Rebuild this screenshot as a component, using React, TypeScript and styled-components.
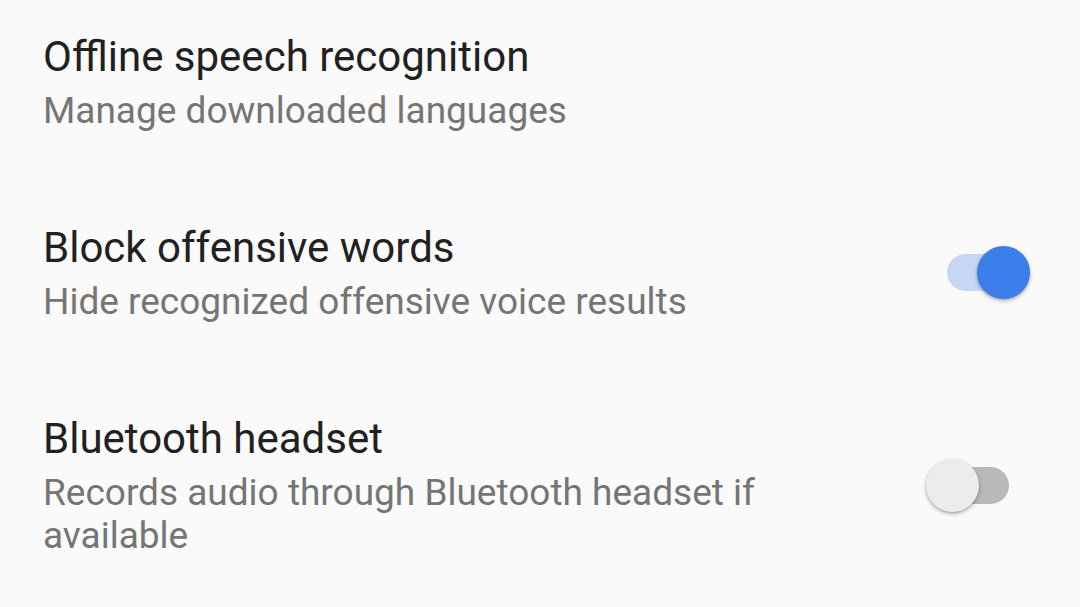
import styled, { createGlobalStyle } from "styled-components"

const GlobalStyle = createGlobalStyle`
  html, body {
    margin: 0;
    padding: 0;
    background: #fafafa;
  }
  body {
    font-family: Roboto, "Noto Sans", sans-serif;
  }
`

interface Setting {
  title: string
  summary: string
  toggle?: boolean
}

const settings: Setting[] = [
  { title: "Offline speech recognition", summary: "Manage downloaded languages" },
  {
    title: "Block offensive words",
    summary: "Hide recognized offensive voice results",
    toggle: true,
  },
  {
    title: "Bluetooth headset",
    summary: "Records audio through Bluetooth headset if available",
    toggle: false,
  },
]

interface SwitchProps {
  $on: boolean
}

export default function App() {
  return (
    <>
      <GlobalStyle />
      <Screen>
        {settings.map((s) => (
          <Row key={s.title}>
            <Texts>
              <Title>{s.title}</Title>
              <Summary>{s.summary}</Summary>
            </Texts>
            {s.toggle !== undefined && (
              <Switch>
                <Track $on={s.toggle} />
                <Thumb $on={s.toggle} />
              </Switch>
            )}
          </Row>
        ))}
      </Screen>
    </>
  )
}

const Screen = styled.div`
  width: 1080px;
  height: 607px;
  overflow: hidden;
  background: #fafafa;
  display: flex;
  flex-direction: column;
  gap: 90px;
  padding-top: 31px;
  box-sizing: border-box;
`

const Row = styled.div`
  display: flex;
  align-items: center;
  justify-content: space-between;
  padding: 0 50px 0 43px;
`

const Texts = styled.div`
  display: flex;
  flex-direction: column;
  max-width: 740px;
`

const Title = styled.div`
  font-size: 42px;
  line-height: 52px;
  color: #212121;
`

const Summary = styled.div`
  margin-top: 6px;
  font-size: 37px;
  line-height: 43px;
  color: #757575;
`

const Switch = styled.div`
  position: relative;
  flex-shrink: 0;
  width: 104px;
  height: 53px;
`

const Track = styled.div<SwitchProps>`
  position: absolute;
  left: 21px;
  top: 8px;
  width: 62px;
  height: 37px;
  border-radius: 19px;
  background: ${({ $on }) => ($on ? "#c6d7f6" : "#b9b9b9")};
`

const Thumb = styled.div<SwitchProps>`
  position: absolute;
  top: 0;
  left: ${({ $on }) => ($on ? "51px" : "0")};
  width: 53px;
  height: 53px;
  border-radius: 50%;
  background: ${({ $on }) => ($on ? "#3c7ee9" : "#ececec")};
  box-shadow: 0 2px 4px rgba(0, 0, 0, 0.25), 0 1px 2px rgba(0, 0, 0, 0.15);
`
